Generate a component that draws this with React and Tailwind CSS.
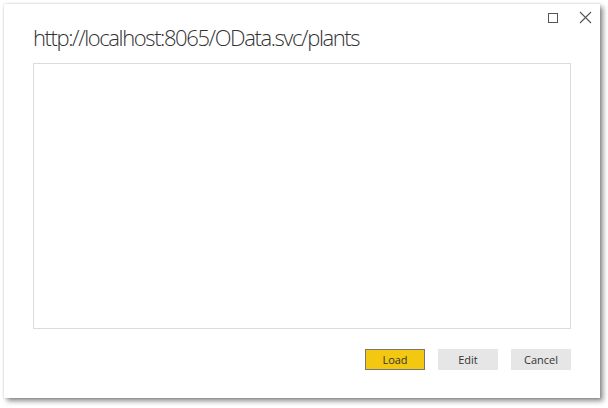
import React from 'react';

const App = () => {
  return (
    <div className="w-[608px] h-[408px] bg-white pt-[4px] pl-[4px] overflow-hidden">
      <div
        className="relative w-[596px] h-[394px] bg-white flex flex-col pl-[29px] pr-[29px] shadow-[0_0_2px_rgba(0,0,0,0.18),3px_3px_5px_rgba(0,0,0,0.45)]"
        style={{ fontFamily: '"Open Sans", "Liberation Sans", sans-serif' }}
      >
        {/* window controls */}
        <div className="absolute top-[7px] right-[8px] flex items-center gap-[20px]">
          <svg width="12" height="12" viewBox="0 0 12 12">
            <rect x="1.5" y="1.5" width="9" height="9" fill="none" stroke="#555" strokeWidth="1" />
          </svg>
          <svg width="13" height="13" viewBox="0 0 13 13">
            <path d="M1 1 L12 12 M12 1 L1 12" stroke="#555" strokeWidth="1.1" fill="none" />
          </svg>
        </div>

        <h1 className="mt-[15px] h-[36px] text-[22px] font-light text-[#333] leading-[36px] tracking-[-1.4px]">
          http://localhost:8065/OData.svc/plants
        </h1>

        <div className="mt-[8px] w-[538px] h-[266px] border border-[#dcdcdc]" />

        <div className="mt-[20px] w-[538px] flex justify-end gap-[13px] text-[11px] text-[#333]">
          <button className="w-[60px] h-[21px] bg-[#f2c811] border border-[#767676] leading-none">Load</button>
          <button className="w-[60px] h-[21px] bg-[#e6e6e6] leading-none">Edit</button>
          <button className="w-[60px] h-[21px] bg-[#e6e6e6] leading-none">Cancel</button>
        </div>
      </div>
    </div>
  );
};

export default App;
